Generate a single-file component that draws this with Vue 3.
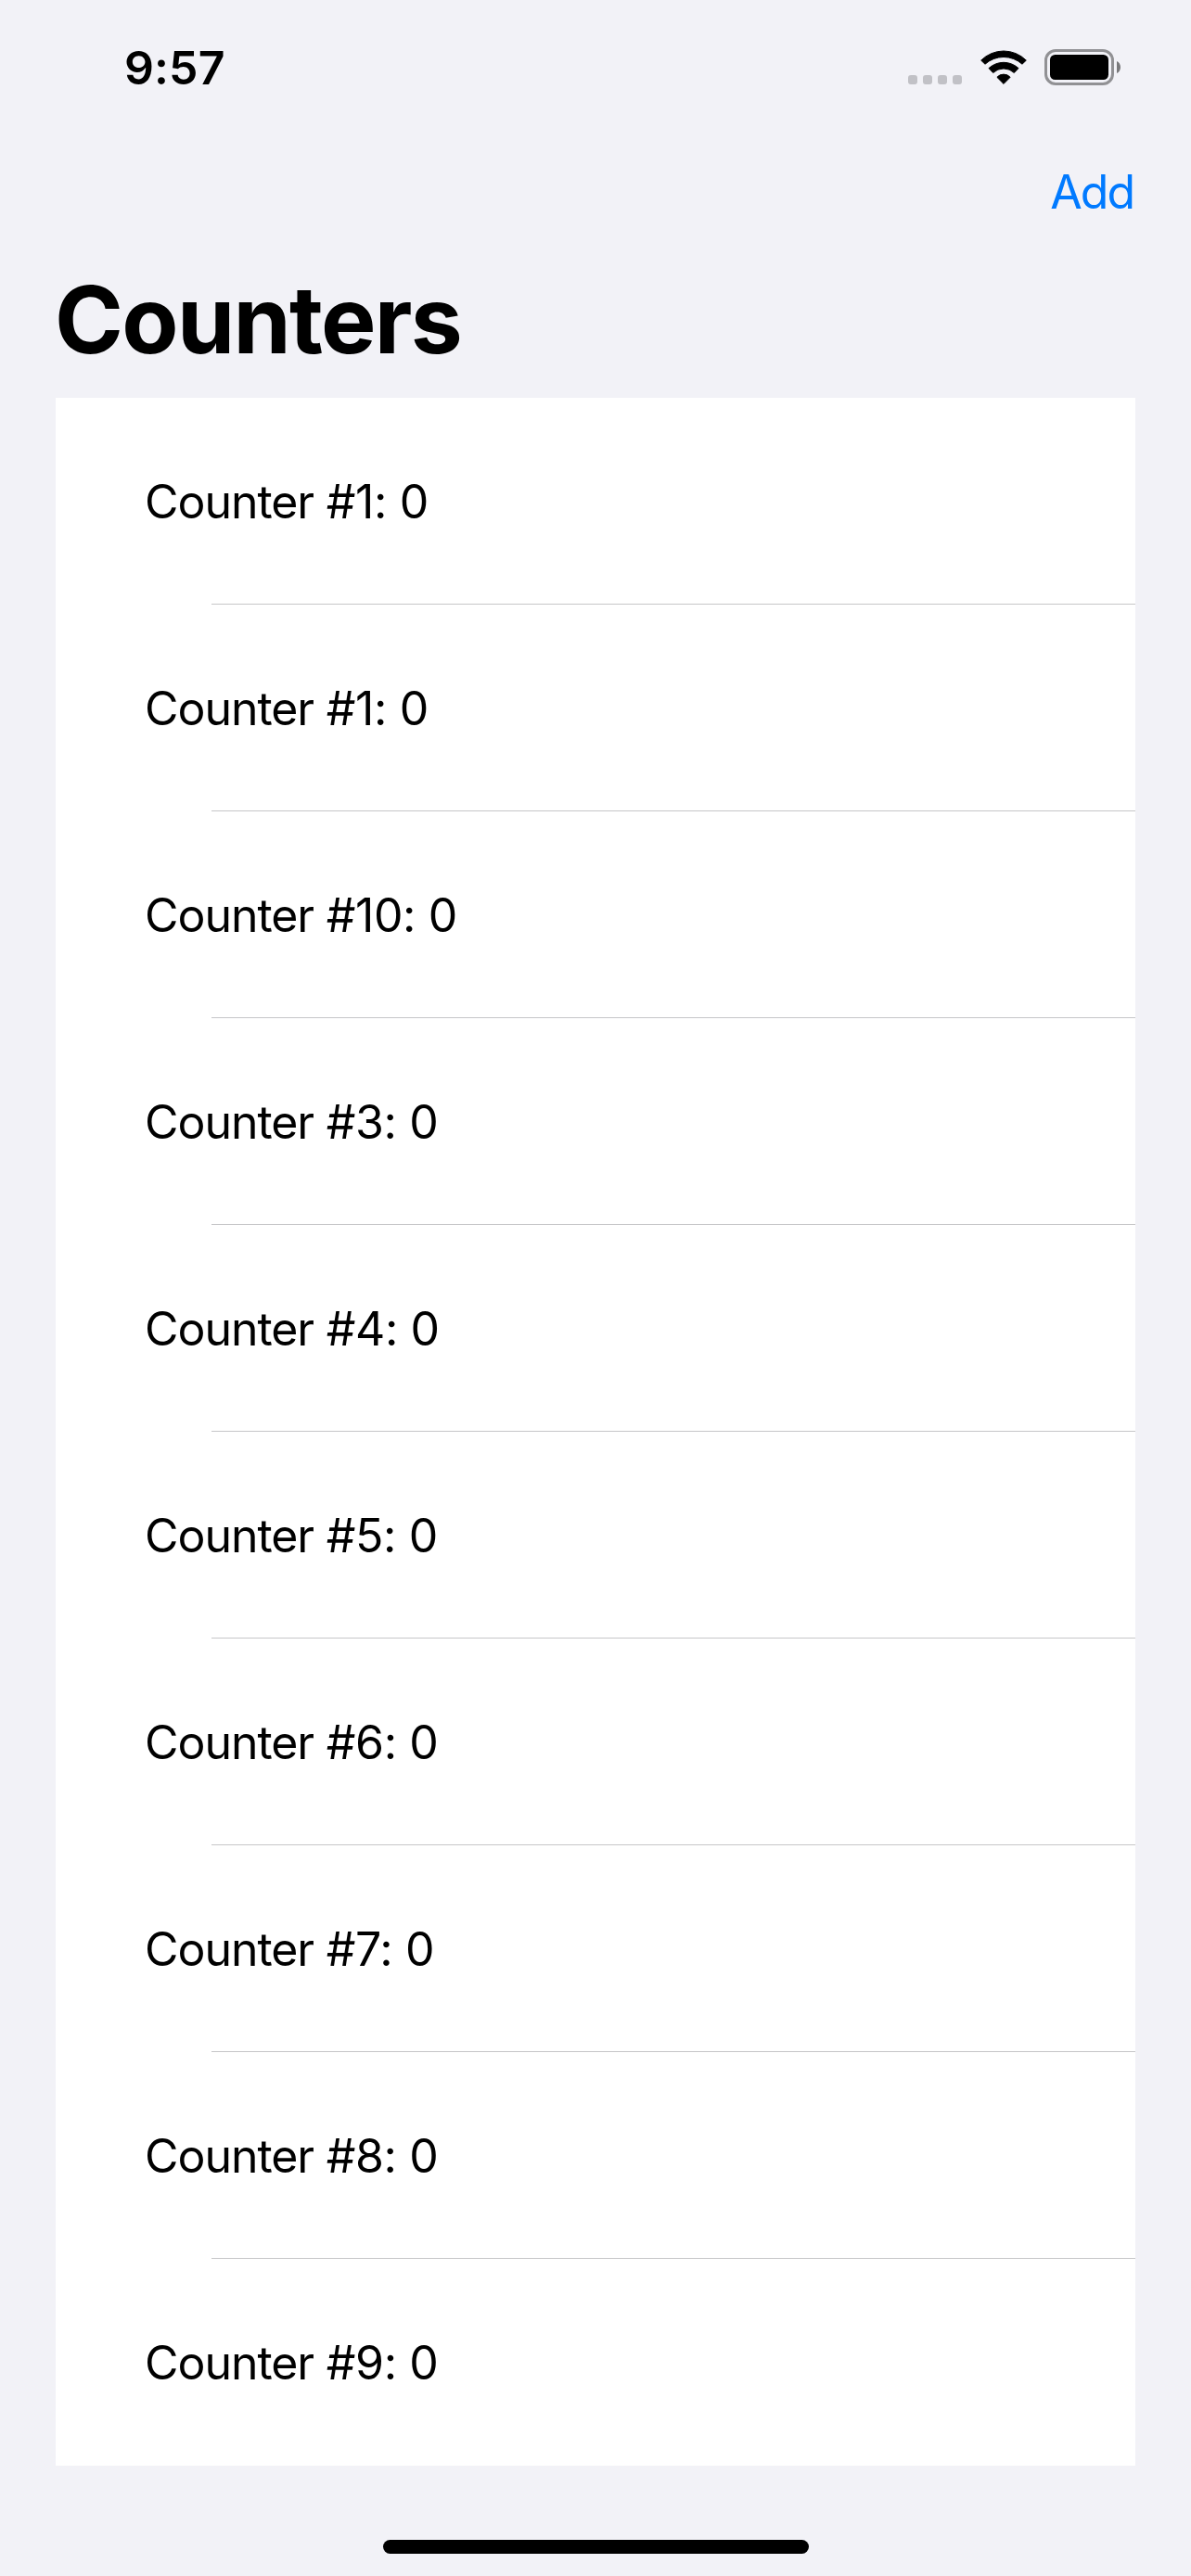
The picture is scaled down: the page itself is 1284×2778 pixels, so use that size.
<script setup>
const counters = ['1', '1', '10', '3', '4', '5', '6', '7', '8', '9']
</script>

<template>
  <main class="screen">
    <header class="status">
      <span class="time">9:57</span>
      <div class="indicators">
        <div class="dots"><i v-for="n in 4" :key="n"></i></div>
        <svg class="wifi" width="50" height="38" viewBox="0 0 50 38">
          <path d="M.7 11.100A34.300 34.300 0 0 1 49.300 11.100L45 15.200A29.800 29.800 0 0 0 5 15.200Z" />
          <path d="M9 19.600A23.500 23.500 0 0 1 41 19.600L36.300 24.500A16.300 16.300 0 0 0 13.700 24.500Z" />
          <path d="M17.900 29.300A9.500 9.500 0 0 1 32.100 29.300L25 36.400Z" />
        </svg>
        <svg class="battery" width="82" height="39" viewBox="0 0 82 39">
          <rect x="1.500" y="1.500" width="72" height="36" rx="10.500" fill="none" stroke="#000" stroke-opacity=".4" stroke-width="3" />
          <rect x="6" y="6" width="63" height="27" rx="5.500" />
          <path d="M78 13v13c2.500-1.100 4-3.600 4-6.500s-1.500-5.400-4-6.500z" fill-opacity=".5" />
        </svg>
      </div>
    </header>
    <nav class="nav"><span class="add">Add</span></nav>
    <h1 class="title">Counters</h1>
    <section class="list">
      <div v-for="(id, i) in counters" :key="i" class="row">
        <span class="label"><span class="name">Counter</span> #{{ id }}: 0</span>
      </div>
    </section>
    <footer class="footer"><div class="home"></div></footer>
  </main>
</template>

<style>
body { margin: 0; background: #f2f2f7; }
</style>

<style scoped>
.screen { width: 1284px; height: 2778px; overflow: hidden; display: flex; flex-direction: column; background: #f2f2f7; color: #000; font-family: Inter, sans-serif; }
.status { height: 144px; display: flex; justify-content: space-between; box-sizing: border-box; padding: 0 76px 0 134px; }
.time { font-size: 50px; line-height: 60px; font-weight: 600; margin-top: 43px; letter-spacing: 0.1px; }
.indicators { display: flex; align-items: flex-start; padding-top: 53px; }
.dots { display: flex; gap: 6px; margin: 28px 19.5px 0 0; }
.dots i { width: 10px; height: 10px; border-radius: 3px; background: #c1c1c6; }
.wifi { margin: 1px 19.5px 0 0; stroke: #000; stroke-width: 1; stroke-linejoin: round; }
.nav { height: 132px; display: flex; justify-content: flex-end; align-items: center; box-sizing: border-box; padding: 0 62px 6px 0; }
.add { font-size: 50px; line-height: 60px; letter-spacing: -2px; color: #007aff; }
.title { height: 153px; margin: 0 0 0 59px; font-size: 100px; line-height: 137px; font-weight: 700; letter-spacing: -1.7px; }
.list { width: 1164px; margin: 0 60px; background: #fff; }
.row { height: 223px; display: flex; align-items: center; box-sizing: border-box; padding: 1px 0 0 96px; background: linear-gradient(#c6c6c8, #c6c6c8) 168px 100% / 996px 1px no-repeat; }
.row:last-child { background: none; }
.label { font-size: 50px; line-height: 60px; white-space: pre; letter-spacing: -0.4px; }
.name { letter-spacing: -1.05px; }
.footer { flex: 1; display: flex; justify-content: center; align-items: flex-end; padding: 0 0 24px 1px; }
.home { width: 459px; height: 15px; border-radius: 8px; background: #000; }
</style>
